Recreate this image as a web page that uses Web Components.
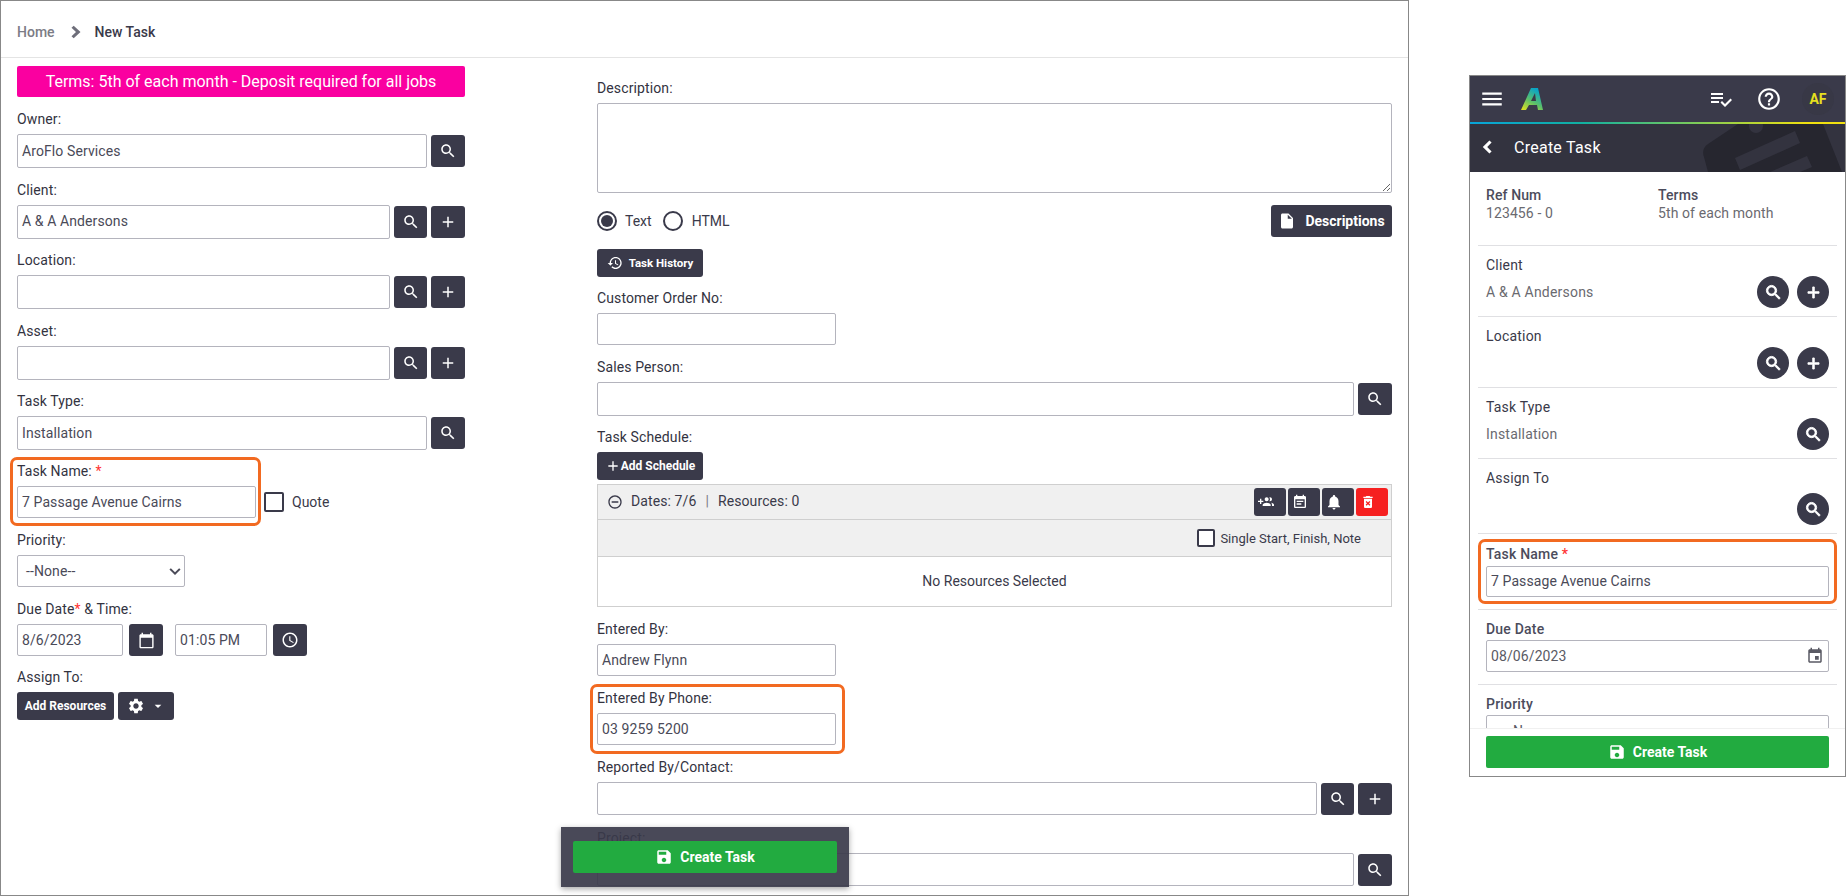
<!DOCTYPE html>
<html lang="en">
<head>
<meta charset="utf-8">
<title>New Task</title>
<style>
html, body { margin: 0; padding: 0; background: #fff; }
body { font-family: Roboto, "Liberation Sans", sans-serif; font-size: 14px; color: #3a3a4a; overflow: hidden; }
</style>
</head>
<body>
<task-screen></task-screen>
<script>
const ICONS = {
  search: 'M15.5 14h-.79l-.28-.27C15.41 12.59 16 11.11 16 9.5 16 5.91 13.09 3 9.5 3S3 5.91 3 9.5 5.91 16 9.5 16c1.61 0 3.09-.59 4.23-1.57l.27.28v.79l5 4.99L20.49 19l-4.99-5zm-6 0C7.01 14 5 11.99 5 9.5S7.01 5 9.5 5 14 7.01 14 9.5 11.99 14 9.5 14z',
  add: 'M19 13h-6v6h-2v-6H5v-2h6V5h2v6h6v2z',
  calendar: 'M20 3h-1V1h-2v2H7V1H5v2H4c-1.1 0-2 .9-2 2v16c0 1.1.9 2 2 2h16c1.1 0 2-.9 2-2V5c0-1.1-.9-2-2-2zm0 18H4V8h16v13z',
  clock: 'M11.99 2C6.47 2 2 6.48 2 12s4.47 10 9.99 10C17.52 22 22 17.52 22 12S17.52 2 11.99 2zM12 20c-4.42 0-8-3.58-8-8s3.58-8 8-8 8 3.58 8 8-3.58 8-8 8zm.5-13H11v6l5.25 3.15.75-1.23-4.5-2.67z',
  gear: 'M19.14 12.94c.04-.3.06-.61.06-.94 0-.32-.02-.64-.07-.94l2.03-1.58c.18-.14.23-.41.12-.61l-1.92-3.32c-.12-.22-.37-.29-.59-.22l-2.39.96c-.5-.38-1.03-.7-1.62-.94l-.36-2.54c-.04-.24-.24-.41-.48-.41h-3.84c-.24 0-.43.17-.47.41l-.36 2.54c-.59.24-1.13.57-1.62.94l-2.39-.96c-.22-.08-.47 0-.59.22L2.74 8.87c-.12.21-.08.47.12.61l2.03 1.58c-.05.3-.09.63-.09.94s.02.64.07.94l-2.03 1.58c-.18.14-.23.41-.12.61l1.92 3.32c.12.22.37.29.59.22l2.39-.96c.5.38 1.03.7 1.62.94l.36 2.54c.05.24.24.41.48.41h3.84c.24 0 .44-.17.47-.41l.36-2.54c.59-.24 1.13-.56 1.62-.94l2.39.96c.22.08.47 0 .59-.22l1.92-3.32c.12-.22.07-.47-.12-.61l-2.01-1.58zM12 15.6c-1.98 0-3.6-1.62-3.6-3.6s1.62-3.6 3.6-3.6 3.6 1.62 3.6 3.6-1.62 3.6-3.6 3.6z',
  file: 'M6 2c-1.1 0-1.99.9-1.99 2L4 20c0 1.1.89 2 1.99 2H18c1.1 0 2-.9 2-2V8l-6-6H6zm7 7V3.5L18.5 9H13z',
  history: 'M13 3c-4.97 0-9 4.03-9 9H1l3.89 3.89.07.14L9 12H6c0-3.87 3.13-7 7-7s7 3.13 7 7-3.13 7-7 7c-1.93 0-3.68-.79-4.94-2.06l-1.42 1.42C8.27 19.99 10.51 21 13 21c4.97 0 9-4.03 9-9s-4.03-9-9-9zm-1 5v5l4.28 2.54.72-1.21-3.5-2.08V8H12z',
  minus: 'M7 11v2h10v-2H7zm5-9C6.48 2 2 6.48 2 12s4.48 10 10 10 10-4.48 10-10S17.52 2 12 2zm0 18c-4.41 0-8-3.59-8-8s3.59-8 8-8 8 3.59 8 8-3.59 8-8 8z',
  people: 'M8 10H5V7H3v3H0v2h3v3h2v-3h3v-2zm10 1c1.66 0 2.99-1.34 2.99-3S19.66 5 18 5c-.32 0-.63.05-.91.14.57.81.9 1.79.9 2.86s-.34 2.04-.9 2.86c.28.09.59.14.91.14zm-5 0c1.66 0 2.99-1.34 2.99-3S14.66 5 13 5s-3 1.34-3 3 1.34 3 3 3zm6.62 2.16c.83.73 1.38 1.66 1.38 2.84v2h3v-2c0-1.54-2.37-2.49-4.38-2.84zM13 13c-2 0-6 1-6 3v2h12v-2c0-2-4-3-6-3z',
  note: 'M17 10H7v2h10v-2zm2-7h-1V1h-2v2H8V1H6v2H5c-1.11 0-1.99.9-1.99 2L3 19c0 1.1.89 2 2 2h14c1.1 0 2-.9 2-2V5c0-1.1-.9-2-2-2zm0 16H5V8h14v11zm-5-5H7v2h7v-2z',
  bell: 'M12 22c1.1 0 2-.9 2-2h-4c0 1.1.89 2 2 2zm6-6v-5c0-3.07-1.64-5.64-4.5-6.32V4c0-.83-.67-1.5-1.5-1.5s-1.5.67-1.5 1.5v.68C7.63 5.36 6 7.92 6 11v5l-2 2v1h16v-1l-2-2z',
  trash: 'M6 19c0 1.1.9 2 2 2h8c1.1 0 2-.9 2-2V7H6v12zm2.46-7.12l1.41-1.41L12 12.59l2.12-2.12 1.41 1.41L13.41 14l2.12 2.12-1.41 1.41L12 15.41l-2.12 2.12-1.41-1.41L10.59 14l-2.13-2.12zM15.5 4l-1-1h-5l-1 1H5v2h14V4h-3.5z',
  save: 'M17 3H5c-1.11 0-2 .9-2 2v14c0 1.1.89 2 2 2h14c1.1 0 2-.9 2-2V7l-4-4zm-5 16c-1.66 0-3-1.34-3-3s1.34-3 3-3 3 1.34 3 3-1.34 3-3 3zm3-10H5V5h10v4z',
  menu: 'M3 18h18v-2H3v2zm0-5h18v-2H3v2zm0-7v2h18V6H3z',
  help: 'M11 18h2v-2h-2v2zm1-16C6.48 2 2 6.48 2 12s4.48 10 10 10 10-4.48 10-10S17.52 2 12 2zm0 18c-4.41 0-8-3.59-8-8s3.59-8 8-8 8 3.59 8 8-3.59 8-8 8zm0-14c-2.21 0-4 1.79-4 4h2c0-1.1.9-2 2-2s2 .9 2 2c0 2-3 1.75-3 5h2c0-2.25 3-2.5 3-5 0-2.21-1.79-4-4-4z',
  tasks: 'M14 10H2v2h12v-2zm0-4H2v2h12V6zM2 16h8v-2H2v2zm19.5-4.5L23 13l-6.99 7-4.51-4.5L13 14l3.01 3 5.49-5.5z',
  back: 'M15.6 7.6L13.4 5.4 6.8 12l6.6 6.6 2.2-2.2L11.2 12z',
  next: 'M7.5 7.8L9.7 5.8 16.5 12 9.7 18.2 7.5 16.2 12 12z',
  event: 'M17 12h-5v5h5v-5zM16 1v2H8V1H6v2H5c-1.11 0-1.99.9-1.99 2L3 19c0 1.1.89 2 2 2h14c1.1 0 2-.9 2-2V5c0-1.1-.9-2-2-2h-1V1h-2zm3 18H5V8h14v11z',
  caret: 'M7 10l5 5 5-5z',
  down: 'M6.5 8.2L12 13.6l5.5-5.4L19.4 10 12 17.4 4.6 10z'
};

function tpl(html) {
  const t = document.createElement('template');
  t.innerHTML = html;
  return t;
}

class UiIcon extends HTMLElement {
  constructor() {
    super();
    const size = this.getAttribute('size') || 18;
    const bold = this.hasAttribute('bold') ? 'stroke="currentColor" stroke-width="1.1"' : '';
    this.attachShadow({mode: 'open'}).innerHTML = `
      <style>:host { display: inline-flex; flex: none; } svg { display: block; fill: currentColor; }</style>
      <svg width="${size}" height="${size}" viewBox="0 0 24 24"><path ${bold} d="${ICONS[this.getAttribute('name')]}"/></svg>`;
  }
}
customElements.define('ui-icon', UiIcon);

const btnTpl = tpl(`
<style>
:host {
  display: inline-flex; align-items: center; justify-content: center; flex: none;
  box-sizing: border-box; height: 32px; min-width: 32px;
  background: var(--btn-bg, #3a3a4a); color: #fff; border-radius: 3px;
  font-size: 12px; font-weight: 700; white-space: nowrap;
}
:host([round]) { border-radius: 50%; }
</style>
<slot></slot>`);
class UiBtn extends HTMLElement {
  constructor() {
    super();
    this.attachShadow({mode: 'open'}).appendChild(btnTpl.content.cloneNode(true));
  }
}
customElements.define('ui-btn', UiBtn);

const boxTpl = tpl(`
<style>
:host {
  display: flex; align-items: center; box-sizing: border-box; flex: 1 1 auto; min-width: 0;
  height: 32px; padding: 0 4px 1px; background: #fff; color: #4a4a58;
  border: 1px solid #b4b4bd; border-radius: 2px; font-size: 14px; letter-spacing: .1px; white-space: nowrap;
}
</style>
<slot></slot>`);
class TextBox extends HTMLElement {
  constructor() {
    super();
    this.attachShadow({mode: 'open'}).appendChild(boxTpl.content.cloneNode(true));
  }
  connectedCallback() {
    const w = this.getAttribute('w'), h = this.getAttribute('h');
    if (w) { this.style.flex = 'none'; this.style.width = w + 'px'; }
    if (h) this.style.height = h + 'px';
  }
}
customElements.define('text-box', TextBox);

const fieldTpl = tpl(`
<style>
:host { display: block; }
.lab { height: 20px; line-height: 20px; margin-bottom: 5px; font-size: 14px; font-weight: 400; letter-spacing: .12px; color: #33333f; white-space: nowrap; }
.row { display: flex; align-items: center; gap: 4px; }
</style>
<div class="lab"></div>
<div class="row"><slot></slot></div>`);
class FormField extends HTMLElement {
  constructor() {
    super();
    this.attachShadow({mode: 'open'}).appendChild(fieldTpl.content.cloneNode(true));
    const lab = this.shadowRoot.querySelector('.lab');
    lab.innerHTML = this.getAttribute('label').replace('*', '<span style="color:#f33">*</span>');
  }
}
customElements.define('form-field', FormField);

// label + box + search button, and a plus button if asked
class LookupField extends HTMLElement {
  constructor() {
    super();
    const add = this.hasAttribute('add');
    const h = this.getAttribute('h') || 34;
    this.attachShadow({mode: 'open'}).innerHTML = `
      <style>:host { display: block; margin-bottom: 11.5px; } ui-btn { width: 34px; } ui-btn.narrow { width: 33px; }</style>
      <form-field label="${this.getAttribute('label')}">
        <text-box h="${h}">${this.getAttribute('value') || ''}</text-box>
        <ui-btn class="${add ? 'narrow' : ''}"><ui-icon name="search" size="18"></ui-icon></ui-btn>
        ${add ? '<ui-btn><ui-icon name="add" size="18"></ui-icon></ui-btn>' : ''}
      </form-field>`;
  }
}
customElements.define('lookup-field', LookupField);

const hiliteTpl = tpl(`
<style>
:host {
  display: block; box-sizing: border-box; flex: none;
  border: 3px solid #f26a21; border-radius: 7px; background: #fff;
}
</style>
<slot></slot>`);
class HighlightBox extends HTMLElement {
  constructor() {
    super();
    this.attachShadow({mode: 'open'}).appendChild(hiliteTpl.content.cloneNode(true));
  }
}
customElements.define('highlight-box', HighlightBox);

class CheckMark extends HTMLElement {
  constructor() {
    super();
    const radio = this.hasAttribute('radio'), on = this.hasAttribute('checked');
    const w = this.getAttribute('w') || 20, h = this.getAttribute('h') || 20;
    this.attachShadow({mode: 'open'}).innerHTML = `
      <style>
      :host { display: inline-flex; flex: none; align-items: center; justify-content: center; box-sizing: border-box;
        width: ${w}px; height: ${h}px; border: 2px solid #3a3a4a; background: #fff;
        border-radius: ${radio ? '50%' : '2px'}; }
      i { display: ${on ? 'block' : 'none'}; width: 12px; height: 12px; border-radius: 50%; background: #3a3a4a; }
      </style><i></i>`;
  }
}
customElements.define('check-mark', CheckMark);

class CrumbBar extends HTMLElement {
  constructor() {
    super();
    this.attachShadow({mode: 'open'}).innerHTML = `
      <style>
      :host { display: flex; align-items: center; box-sizing: border-box; height: 57px; padding: 6px 16px 0; border-bottom: 1px solid #e4e4e4; font-size: 14px; font-weight: 500; }
      .home { color: #7c7c86; }
      ui-icon { color: #6e6e7a; margin: 0 6px 0 9px; }
      .cur { color: #3a3a4a; margin-left: 1px; }
      </style>
      <span class="home">Home</span><ui-icon name="next" size="24"></ui-icon><span class="cur">New Task</span>`;
  }
}
customElements.define('crumb-bar', CrumbBar);

class TermsBanner extends HTMLElement {
  constructor() {
    super();
    this.attachShadow({mode: 'open'}).innerHTML = `
      <style>:host { display: flex; align-items: center; justify-content: center; height: 31px; margin-bottom: 12px; background: #fa00a0; color: #fff; border-radius: 2px; font-size: 16px; }</style>
      <slot></slot>`;
  }
}
customElements.define('terms-banner', TermsBanner);

class LeftColumn extends HTMLElement {
  constructor() {
    super();
    this.attachShadow({mode: 'open'}).innerHTML = `
      <style>
      :host { display: block; box-sizing: border-box; width: 448px; padding-top: 8px; flex: none; }
      .name { display: flex; align-items: center; gap: 3px; margin: -4.5px 0 0 -7px; }
      .name highlight-box { width: 251px; padding: 1px 2px 5px 4px; }
      .quote { display: flex; align-items: center; gap: 8px; margin-top: 20px; }
      .tight { margin-top: 4px; }
      .sel { justify-content: space-between; padding: 0 0 1px 8px; }
      .due ui-btn { width: 34px; }
      .assign { margin-top: 11px; }
      .assign ui-btn { height: 28px; }
      .cog { width: 56px; gap: 5px; }
      .add { width: 97px; }
      </style>
      <terms-banner>Terms: 5th of each month - Deposit required for all jobs</terms-banner>
      <lookup-field label="Owner:" value="AroFlo Services"></lookup-field>
      <lookup-field label="Client:" value="A &amp; A Andersons" add></lookup-field>
      <lookup-field label="Location:" add></lookup-field>
      <lookup-field label="Asset:" add></lookup-field>
      <lookup-field label="Task Type:" value="Installation"></lookup-field>
      <div class="name">
        <highlight-box>
          <form-field label="Task Name: *"><text-box>7 Passage Avenue Cairns</text-box></form-field>
        </highlight-box>
        <div class="quote"><check-mark></check-mark><span>Quote</span></div>
      </div>
      <form-field class="tight" label="Priority:">
        <text-box class="sel" w="168"><span>--None--</span><ui-icon name="down" size="18"></ui-icon></text-box>
      </form-field>
      <form-field class="due" style="margin-top:12px" label="Due Date* &amp; Time:">
        <text-box w="106">8/6/2023</text-box>
        <ui-btn style="margin-left:2px"><ui-icon name="calendar" size="17"></ui-icon></ui-btn>
        <text-box w="92" style="margin-left:8px">01:05 PM</text-box>
        <ui-btn style="margin-left:2px"><ui-icon name="clock" size="18"></ui-icon></ui-btn>
      </form-field>
      <form-field class="assign" label="Assign To:">
        <ui-btn class="add">Add Resources</ui-btn>
        <ui-btn class="cog"><ui-icon name="gear" size="18"></ui-icon><ui-icon name="caret" size="16"></ui-icon></ui-btn>
      </form-field>`;
  }
}
customElements.define('left-column', LeftColumn);

class ScheduleTable extends HTMLElement {
  constructor() {
    super();
    this.attachShadow({mode: 'open'}).innerHTML = `
      <style>
      :host { display: block; box-sizing: border-box; height: 123px; border: 1px solid #cfcfcf; }
      .head { display: flex; align-items: center; height: 34px; padding: 0 3px 0 9px; background: #f0f0f0; border-bottom: 1px solid #cfcfcf; letter-spacing: .1px; }
      .head ui-icon { margin-right: 8px; }
      .head > span { position: relative; top: -1px; }
      .bar { color: #7c7c86; margin: 0 9px; }
      .tools { margin-left: auto; display: flex; gap: 2px; }
      .tools ui-btn { height: 28px; }
      .opts { display: flex; align-items: center; justify-content: flex-end; height: 36px; padding-right: 30px; gap: 5px; background: #f0f0f0; border-bottom: 1px solid #cfcfcf; font-size: 13px; }
      .empty { display: flex; align-items: center; justify-content: center; height: 49px; padding-bottom: 2px; box-sizing: border-box; }
      .del { --btn-bg: #f62020; }
      </style>
      <div class="head">
        <ui-icon name="minus" size="16"></ui-icon><span>Dates: 7/6</span><span class="bar">|</span><span>Resources: 0</span>
        <div class="tools">
          <ui-btn><ui-icon name="people" size="16"></ui-icon></ui-btn>
          <ui-btn><ui-icon name="note" size="16"></ui-icon></ui-btn>
          <ui-btn><ui-icon name="bell" size="18"></ui-icon></ui-btn>
          <ui-btn class="del"><ui-icon name="trash" size="16"></ui-icon></ui-btn>
        </div>
      </div>
      <div class="opts"><check-mark w="18" h="18"></check-mark><span>Single Start, Finish, Note</span></div>
      <div class="empty">No Resources Selected</div>`;
  }
}
customElements.define('schedule-table', ScheduleTable);

class RightColumn extends HTMLElement {
  constructor() {
    super();
    this.attachShadow({mode: 'open'}).innerHTML = `
      <style>
      :host { display: block; box-sizing: border-box; width: 795px; padding-top: 20px; flex: none; }
      .desc { display: block; box-sizing: border-box; width: 100%; height: 90px; margin: 0; padding: 4px; border: 1px solid #b4b4bd; border-radius: 2px; background: #fff; outline: none; }
      .modes { display: flex; align-items: center; margin-top: 12px; height: 32px; }
      .modes span { margin: 0 11px 0 8px; }
      .modes span + check-mark + span { margin-left: 9px; }
      .modes ui-btn { margin-left: auto; width: 121px; gap: 9px; font-size: 14px; }
      .hist { margin-top: 12px; width: 106px; height: 28px; gap: 6px; font-size: 11.5px; }
      .sched { width: 106px; height: 28px; font-size: 12px; }
      ui-btn.plain { width: 34px; }
      ui-btn.narrow { width: 33px; }
      form-field.s { margin-top: 11px; }
      .phone { width: 255px; margin: 8px 0 0 -7px; padding: 1px 6px 6px 4px; }
      </style>
      <form-field label="Description:"><textarea class="desc"></textarea></form-field>
      <div class="modes">
        <check-mark radio checked></check-mark><span>Text</span>
        <check-mark radio></check-mark><span>HTML</span>
        <ui-btn><ui-icon name="file" size="18"></ui-icon>Descriptions</ui-btn>
      </div>
      <ui-btn class="hist"><ui-icon name="history" size="16"></ui-icon>Task History</ui-btn>
      <form-field class="s" label="Customer Order No:"><text-box w="239"></text-box></form-field>
      <form-field style="margin-top:12px" label="Sales Person:"><text-box h="34"></text-box><ui-btn class="plain"><ui-icon name="search"></ui-icon></ui-btn></form-field>
      <form-field style="margin-top:11px;margin-bottom:4px" label="Task Schedule:" ><ui-btn class="sched"><ui-icon name="add" size="16"></ui-icon>Add Schedule</ui-btn></form-field>
      <schedule-table></schedule-table>
      <form-field style="margin-top:12px" label="Entered By:"><text-box w="239">Andrew Flynn</text-box></form-field>
      <highlight-box class="phone"><form-field label="Entered By Phone:"><text-box w="239">03 9259 5200</text-box></form-field></highlight-box>
      <form-field style="margin-top:3px" label="Reported By/Contact:"><text-box h="33"></text-box><ui-btn class="narrow"><ui-icon name="search"></ui-icon></ui-btn><ui-btn class="plain"><ui-icon name="add"></ui-icon></ui-btn></form-field>
      <form-field style="margin-top:13px" label="Project:"><text-box h="33"></text-box><ui-btn class="plain"><ui-icon name="search"></ui-icon></ui-btn></form-field>`;
  }
}
customElements.define('right-column', RightColumn);

class CreateBar extends HTMLElement {
  constructor() {
    super();
    this.attachShadow({mode: 'open'}).innerHTML = `
      <style>
      :host { position: absolute; left: 560px; top: 826px; width: 288px; height: 60px; box-sizing: border-box; padding: 14px 12px; background: rgba(58,58,74,.92); box-shadow: 0 2px 6px rgba(0,0,0,.35); }
      green-btn { width: 100%; }
      </style>
      <green-btn>Create Task</green-btn>`;
  }
}
customElements.define('create-bar', CreateBar);

class GreenBtn extends HTMLElement {
  constructor() {
    super();
    this.attachShadow({mode: 'open'}).innerHTML = `
      <style>
      :host { display: flex; align-items: center; justify-content: center; gap: 7px; box-sizing: border-box; height: 32px; background: #22ab40; color: #fff; border-radius: 2px; font-size: 14px; font-weight: 700; }
      </style>
      <ui-icon name="save" size="18"></ui-icon><slot></slot>`;
  }
}
customElements.define('green-btn', GreenBtn);

class DeskWindow extends HTMLElement {
  constructor() {
    super();
    this.attachShadow({mode: 'open'}).innerHTML = `
      <style>
      :host { display: block; position: relative; box-sizing: border-box; flex: none; width: 1409px; height: 896px; border: 1px solid #888; overflow: hidden; background: #fff; }
      .cols { display: flex; gap: 132px; padding: 0 16px; }
      </style>
      <crumb-bar></crumb-bar>
      <div class="cols"><left-column></left-column><right-column></right-column></div>
      <create-bar></create-bar>`;
  }
}
customElements.define('desk-window', DeskWindow);

class MobileTop extends HTMLElement {
  constructor() {
    super();
    this.attachShadow({mode: 'open'}).innerHTML = `
      <style>
      :host { display: flex; flex: none; align-items: center; height: 46px; padding: 0 11px 0 9px; background: #3a3a4a; color: #fff; }
      .logo { margin: 0 0 0 15px; }
      .tasks { margin-left: auto; }
      .help { margin-left: 23px; }
      .af { display: flex; align-items: center; justify-content: center; width: 32px; height: 32px; margin-left: 20px; border-radius: 50%; background: #383846; color: #e6e01e; font-size: 14px; font-weight: 700; }
      </style>
      <ui-icon name="menu" size="26"></ui-icon>
      <svg class="logo" width="24" height="24" viewBox="0 0 24 24">
        <defs><linearGradient id="lg" x1="0" y1="1" x2=".6" y2="0">
          <stop offset="0" stop-color="#e8e41a"/><stop offset=".5" stop-color="#5cc06a"/><stop offset="1" stop-color="#08a4c8"/>
        </linearGradient></defs>
        <path fill="url(#lg)" fill-rule="evenodd" d="M11 1h7l5 22h-5l-1-5H9l-3 5H1zM15 6L11 14H16z"/>
      </svg>
      <ui-icon class="tasks" name="tasks" size="24"></ui-icon>
      <ui-icon class="help" name="help" size="26"></ui-icon>
      <div class="af">AF</div>`;
  }
}
customElements.define('mobile-top', MobileTop);

class MobileTitle extends HTMLElement {
  constructor() {
    super();
    this.attachShadow({mode: 'open'}).innerHTML = `
      <style>
      :host { display: flex; flex: none; align-items: center; position: relative; height: 48px; padding: 0 0 2px 6px; box-sizing: border-box; background: #33333f; color: #fff; font-size: 16px; letter-spacing: .25px; overflow: hidden; }
      ui-icon { margin-right: 14px; position: relative; }
      span { position: relative; }
      svg { position: absolute; left: 0; top: 0; }
      </style>
      <svg width="375" height="48" viewBox="0 0 375 48">
        <path fill="#26262f" d="M268 0H353L372 48H238L234 33Q231 25 238 20z"/>
        <circle cx="286" cy="2" r="7" fill="#33333f"/>
        <path fill="#33333f" d="M265 34 325 7 330 19 270 46zM300 48 337 32 342 43 330 48z"/>
      </svg>
      <ui-icon name="back" size="24"></ui-icon><span>Create Task</span>`;
  }
}
customElements.define('mobile-title', MobileTitle);

class MobileRow extends HTMLElement {
  constructor() {
    super();
    const gap = this.getAttribute('gap') || 1;
    const btns = (this.getAttribute('btns') || '').split(' ').filter(Boolean)
      .map(n => `<ui-btn round><ui-icon name="${n}" size="19" bold></ui-icon></ui-btn>`).join('');
    this.attachShadow({mode: 'open'}).innerHTML = `
      <style>
      :host { display: block; padding: 9px 8px 8px; border-bottom: 1px solid #e0e0e3; }
      .lab { height: 20px; line-height: 20px; color: #3a3a4a; letter-spacing: .2px; }
      .row { display: flex; align-items: center; gap: 8px; margin-top: ${gap}px; height: 32px; }
      .val { margin-right: auto; color: #6a6a70; letter-spacing: .2px; }
      </style>
      <div class="lab">${this.getAttribute('label')}</div>
      <div class="row"><span class="val">${this.getAttribute('value') || ''}</span>${btns}</div>`;
  }
}
customElements.define('mobile-row', MobileRow);

class MobilePanel extends HTMLElement {
  constructor() {
    super();
    this.attachShadow({mode: 'open'}).innerHTML = `
      <style>
      :host { display: flex; flex-direction: column; box-sizing: border-box; flex: none; width: 377px; height: 702px; margin: 75px 0 0 60px; border: 1px solid #888; background: #fff; }
      .rule { flex: none; height: 2px; background: linear-gradient(90deg, #08a4d8 0%, #12b0a0 30%, #7ccb5a 60%, #f0e010 90%); }
      .body { flex: 1 1 0; min-height: 0; overflow: hidden; padding: 0 8px; }
      .refs { display: grid; grid-template-columns: 172px 1fr; height: 74px; box-sizing: border-box; padding: 14px 8px 0; border-bottom: 1px solid #e0e0e3; line-height: 18px; letter-spacing: .1px; }
      .refs b { display: block; font-weight: 500; color: #4c4c5c; }
      .refs span { display: block; color: #6a6a70; }
      .lab { height: 20px; line-height: 20px; font-weight: 500; color: #4c4c5c; letter-spacing: .2px; }
      .name { margin-top: 5px; padding: 2px 5px 4px; }
      .name .star { color: #f33; }
      .name text-box { height: 31px; margin-top: 2px; }
      .sect { padding: 9px 8px 12px; border-bottom: 1px solid #e0e0e3; }
      .sect text-box { margin-top: 1px; color: #5a5a64; justify-content: space-between; height: 32px; }
      .sep { border-bottom: 1px solid #e0e0e3; height: 5px; }
      .foot { flex: none; height: 48px; box-sizing: border-box; padding: 7px 16px; background: #fff; border-top: 1px solid #f0f0f0; }
      </style>
      <mobile-top></mobile-top>
      <div class="rule"></div>
      <mobile-title></mobile-title>
      <div class="body">
        <div class="refs">
          <div><b>Ref Num</b><span>123456 - 0</span></div>
          <div><b>Terms</b><span>5th of each month</span></div>
        </div>
        <mobile-row label="Client" value="A &amp; A Andersons" btns="search add"></mobile-row>
        <mobile-row label="Location" btns="search add"></mobile-row>
        <mobile-row label="Task Type" value="Installation" btns="search"></mobile-row>
        <mobile-row label="Assign To" gap="5" btns="search"></mobile-row>
        <highlight-box class="name">
          <div class="lab">Task Name <span class="star">*</span></div>
          <text-box>7 Passage Avenue Cairns</text-box>
        </highlight-box>
        <div class="sep"></div>
        <div class="sect">
          <div class="lab">Due Date</div>
          <text-box>08/06/2023<ui-icon name="event" size="18"></ui-icon></text-box>
        </div>
        <div class="sect">
          <div class="lab">Priority</div>
          <text-box style="padding-left:18px;margin-top:1px">--None--</text-box>
        </div>
      </div>
      <div class="foot"><green-btn>Create Task</green-btn></div>`;
  }
}
customElements.define('mobile-panel', MobilePanel);

class TaskScreen extends HTMLElement {
  constructor() {
    super();
    this.attachShadow({mode: 'open'}).innerHTML = `
      <style>:host { display: flex; align-items: flex-start; width: 1846px; height: 896px; }</style>
      <desk-window></desk-window><mobile-panel></mobile-panel>`;
  }
}
customElements.define('task-screen', TaskScreen);
</script>
</body>
</html>
